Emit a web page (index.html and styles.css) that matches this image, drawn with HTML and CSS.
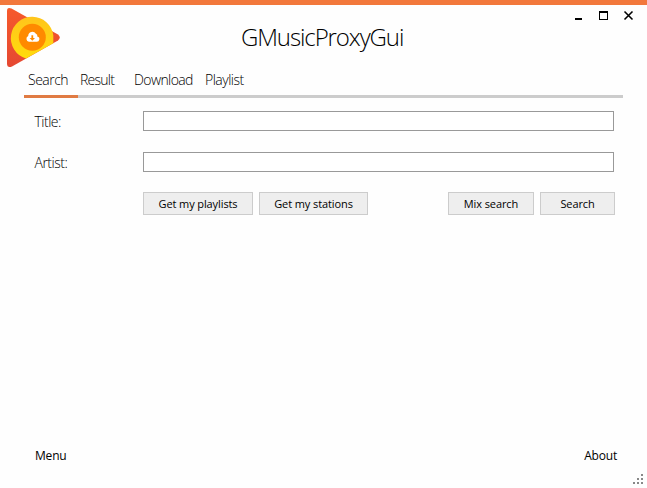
FILE: index.html
```html
<!DOCTYPE html>
<html lang="en">
<head>
<meta charset="utf-8">
<title>GMusicProxyGui</title>
<link rel="stylesheet" href="styles.css">
</head>
<body>
<div class="window">
  <header class="header">
    <svg class="logo" width="56" height="62" viewBox="6 6 56 62">
      <defs>
        <linearGradient id="red" x1="0" y1="0" x2="0" y2="1"><stop offset="0" stop-color="#f65a2c"/><stop offset="1" stop-color="#e54832"/></linearGradient>
        <linearGradient id="gold" x1="0" y1="0" x2="0" y2="1"><stop offset="0" stop-color="#ffc51c"/><stop offset="1" stop-color="#ffdc0c"/></linearGradient>
      </defs>
      <path d="M7 11Q7 6.500 11.500 8.500L58 34.500Q61.500 37.500 58 40.500L12 66.500Q7 68.500 7 63.500Z" fill="url(#red)"/>
      <path d="M26 58.500A21.300 21.300 0 1 1 53.300 35.500V43.200Z" fill="url(#gold)"/>
      <circle cx="32.300" cy="37.300" r="13.500" fill="#ff8a00"/>
      <path d="M29 41.700a3 3 0 0 1-.8-5.700 4.200 4.200 0 0 1 7.700-2.200 2.200 2.200 0 0 1 1.400 2.600 2.700 2.700 0 0 1-1 5.300Z" fill="#fff"/>
      <path d="M31.400 35.300h1.800v2.700h1.800l-2.700 2.800-2.700-2.800h1.800Z" fill="#ff8a00"/>
    </svg>
    <h1 class="title">GMusicProxyGui</h1>
    <svg class="controls" width="64" height="12" viewBox="574 10 64 12" shape-rendering="crispEdges">
      <path d="M575 18h7v2h-7Z"/>
      <path d="M599 11h9v9h-9ZM600 13v6h7v-6Z" fill-rule="evenodd"/>
      <path d="M624.500 11.500l8 8M632.500 11.500l-8 8" fill="none" stroke="#000" stroke-width="1.600" shape-rendering="auto"/>
    </svg>
  </header>
  <nav class="tabs">
    <a class="tab tab-search active">Search</a>
    <a class="tab tab-result">Result</a>
    <a class="tab tab-download">Download</a>
    <a class="tab tab-playlist">Playlist</a>
  </nav>
  <main class="form">
    <label class="field"><span class="name name-title">Title:</span><input class="input" type="text"></label>
    <label class="field"><span class="name">Artist:</span><input class="input" type="text"></label>
    <div class="actions">
      <button class="button playlists">Get my playlists</button>
      <button class="button stations">Get my stations</button>
      <button class="button mix">Mix search</button>
      <button class="button search">Search</button>
    </div>
  </main>
  <footer class="footer">
    <span class="menu">Menu</span>
    <span class="about">About</span>
  </footer>
  <svg class="grip" width="10" height="10" viewBox="0 0 10 10" shape-rendering="crispEdges" fill="#888">
    <path d="M8 0h2v2h-2ZM4 4h2v2h-2ZM8 4h2v2h-2ZM0 8h2v2h-2ZM4 8h2v2h-2ZM8 8h2v2h-2Z"/>
  </svg>
</div>
</body>
</html>
```
FILE: styles.css
```css
* { box-sizing: border-box; }
body { margin: 0; background: #fefefe; color: #000; font-family: "Open Sans", "Noto Sans", sans-serif; }
.window { position: relative; display: flex; flex-direction: column; width: 647px; height: 488px; border-top: 5px solid #f2783c; overflow: hidden; }
.header { display: grid; grid-template-columns: 56px 1fr 64px; height: 63px; padding: 1px 9px 0 6px; }
.logo { display: block; }
.title { margin: 11px 0 0 179px; font-size: 24px; line-height: 40px; font-weight: 300; letter-spacing: -1.1px; white-space: nowrap; }
.controls { display: block; margin-top: 4px; }
.tabs { display: flex; height: 30px; margin: 0 24px; border-bottom: 3px solid #ccc; font-size: 14px; line-height: 24px; font-weight: 300; white-space: nowrap; }
.tab { height: 30px; padding-left: 4px; letter-spacing: -0.5px; }
.tab-search { width: 54px; }
.tab-result { width: 52px; padding-left: 2px; letter-spacing: -0.75px; }
.tab-download { width: 71px; letter-spacing: -0.6px; }
.active { border-bottom: 3px solid #e07b43; }
.form { display: flex; flex-direction: column; padding: 13px 32px 0 34px; }
.field { display: flex; height: 20px; margin-bottom: 21px; }
.name { width: 109px; padding-left: 0.5px; font-size: 14px; line-height: 21px; font-weight: 300; letter-spacing: -0.5px; }
.input { width: 471px; height: 20px; margin: 0; padding: 0 4px; border: 1px solid #999; background: #fff; outline: none; }
.actions { display: flex; gap: 6px; height: 23px; margin: -1px 0 0 109px; }
.button { height: 23px; padding: 0; border: 1px solid #ccc; background: #eee; color: #000; font-family: "Open Sans", "Noto Sans", sans-serif; font-size: 11px; line-height: 21px; letter-spacing: -0.1px; white-space: nowrap; font-weight: 500; }
.playlists { width: 110px; flex: none; }
.stations { width: 109px; flex: none; }
.mix { width: 86px; flex: none; margin-left: 74px; }
.search { width: 75px; flex: none; }
.footer { display: flex; justify-content: space-between; margin-top: auto; padding: 0 30px 22px 35px; font-size: 12px; line-height: 20px; letter-spacing: -0.2px; color: #000; }
.grip { position: absolute; right: 4px; bottom: 4px; }
```
